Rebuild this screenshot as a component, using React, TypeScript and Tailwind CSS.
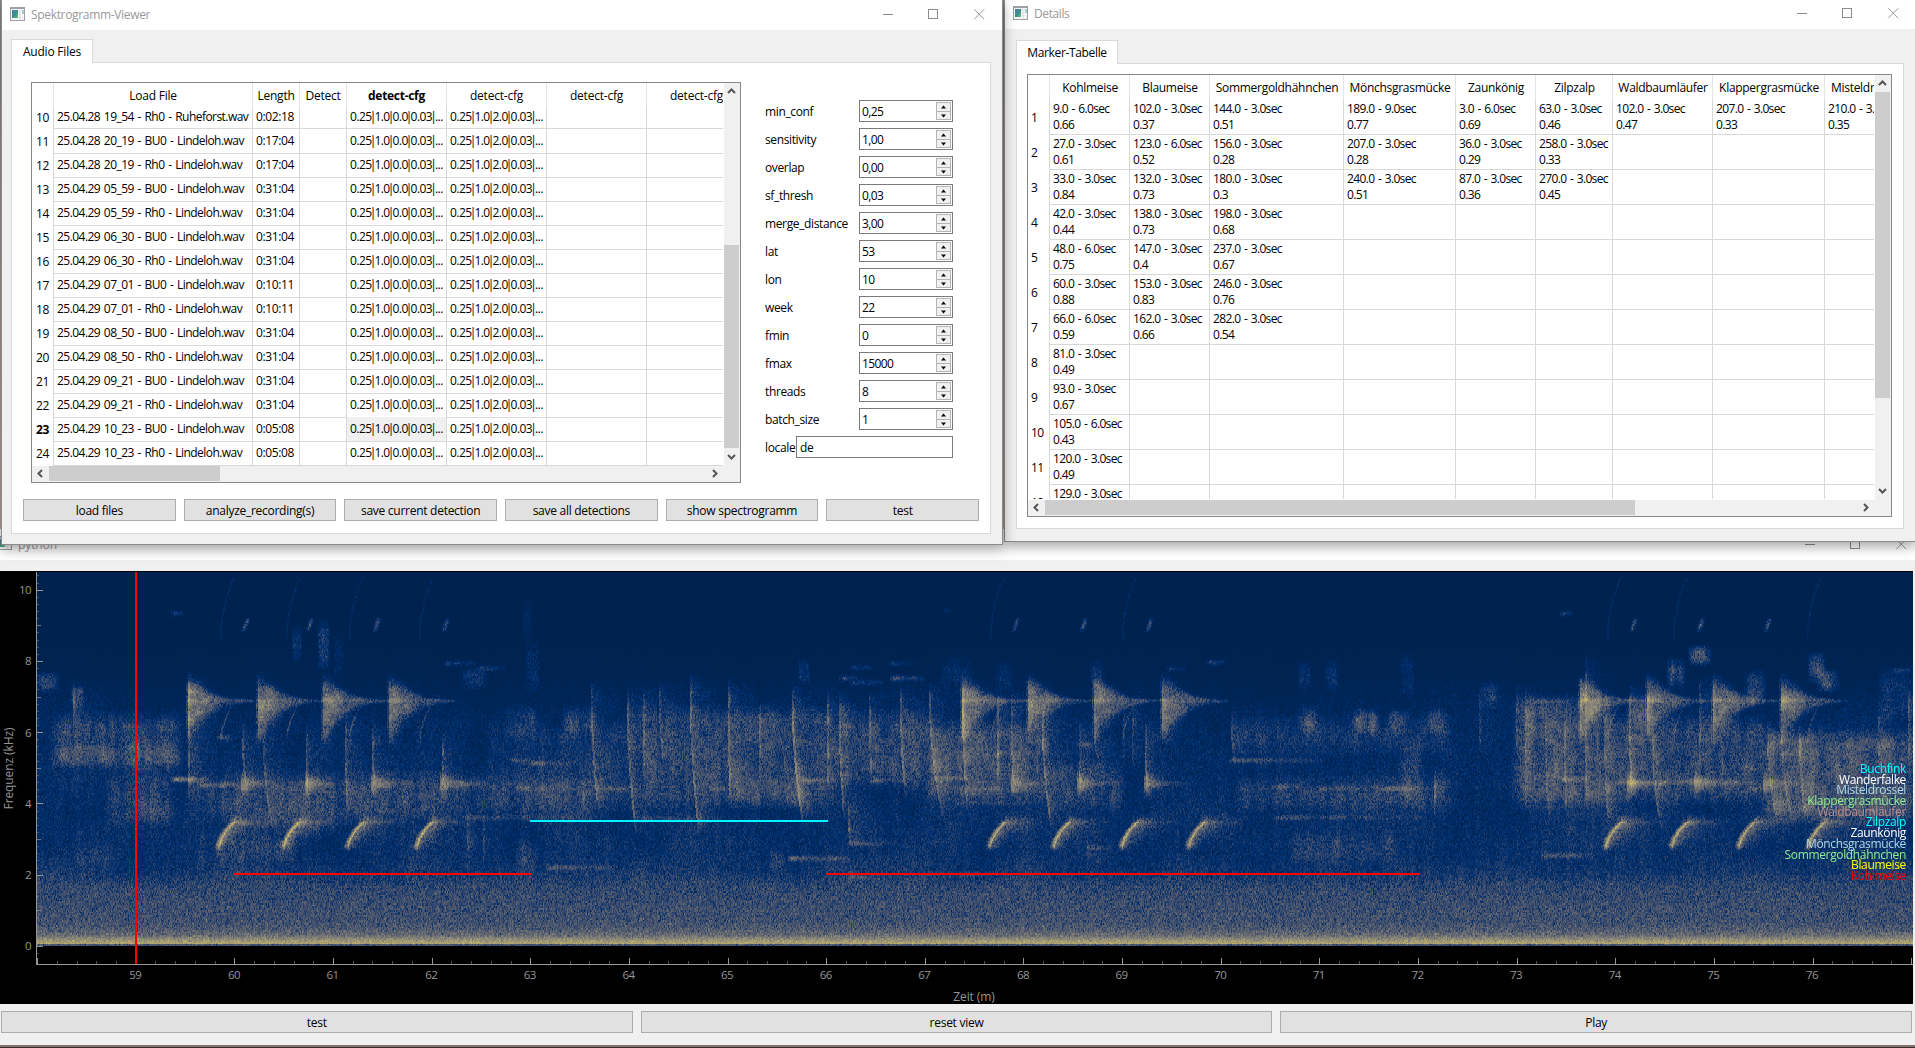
import { Fragment, useLayoutEffect, useRef } from "react";
import type { ReactNode } from "react";
import { clsx } from "clsx";

/* ---------- window chrome ---------- */

function AppIcon() {
  return (
    <svg width="15" height="14" viewBox="0 0 15 14" shapeRendering="crispEdges" className="shrink-0">
      <defs>
        <linearGradient id="appIconFill" x1="0" y1="0" x2="1" y2="1">
          <stop offset="0" stopColor="#4b7fb5" />
          <stop offset="0.55" stopColor="#3f8f86" />
          <stop offset="1" stopColor="#6fbf7a" />
        </linearGradient>
      </defs>
      <rect x="0" y="0" width="15" height="14" fill="#9aa0a6" />
      <rect x="1" y="2" width="13" height="11" fill="#f3f5f7" />
      <rect x="2" y="3" width="6" height="8" fill="url(#appIconFill)" />
      <rect x="9" y="3" width="2" height="9" fill="#e3e6ea" />
      <rect x="12" y="3" width="2" height="4" fill="#a9d0c4" />
    </svg>
  );
}

function WindowButtons() {
  return (
    <svg width="102" height="11" viewBox="0 0 102 11" className="shrink-0" stroke="#8c8c8c" fill="none">
      <path d="M0 5.5H10" />
      <rect x="45.5" y="0.5" width="9" height="9" />
      <path d="M91.3 0.3L101.2 10.2M101.2 0.3L91.3 10.2" strokeWidth="0.9" />
    </svg>
  );
}

function Caret({ dir }: { dir: "up" | "down" | "left" | "right" }) {
  const d = {
    up: "M1 6L4.5 2.5L8 6",
    down: "M1 3L4.5 6.5L8 3",
    left: "M6 1L2.5 4.5L6 8",
    right: "M3 1L6.5 4.5L3 8",
  }[dir];
  return (
    <svg width="9" height="9" viewBox="0 0 9 9" className="shrink-0">
      <path d={d} fill="none" stroke="#555" strokeWidth="2" />
    </svg>
  );
}

function Button({ children }: { children: ReactNode }) {
  return (
    <button className="flex h-[22px] min-w-0 flex-1 items-center justify-center border border-[#adadad] bg-[#e1e1e1] pt-[2px] text-[12px] tracking-[-0.27px]">
      {children}
    </button>
  );
}

/* ---------- left window ---------- */

const RECORDINGS: [number, string, string][] = [
  [10, "25.04.28 19_54 - Rh0 - Ruheforst.wav", "0:02:18"],
  [11, "25.04.28 20_19 - BU0 - Lindeloh.wav", "0:17:04"],
  [12, "25.04.28 20_19 - Rh0 - Lindeloh.wav", "0:17:04"],
  [13, "25.04.29 05_59 - BU0 - Lindeloh.wav", "0:31:04"],
  [14, "25.04.29 05_59 - Rh0 - Lindeloh.wav", "0:31:04"],
  [15, "25.04.29 06_30 - BU0 - Lindeloh.wav", "0:31:04"],
  [16, "25.04.29 06_30 - Rh0 - Lindeloh.wav", "0:31:04"],
  [17, "25.04.29 07_01 - BU0 - Lindeloh.wav", "0:10:11"],
  [18, "25.04.29 07_01 - Rh0 - Lindeloh.wav", "0:10:11"],
  [19, "25.04.29 08_50 - BU0 - Lindeloh.wav", "0:31:04"],
  [20, "25.04.29 08_50 - Rh0 - Lindeloh.wav", "0:31:04"],
  [21, "25.04.29 09_21 - BU0 - Lindeloh.wav", "0:31:04"],
  [22, "25.04.29 09_21 - Rh0 - Lindeloh.wav", "0:31:04"],
  [23, "25.04.29 10_23 - BU0 - Lindeloh.wav", "0:05:08"],
  [24, "25.04.29 10_23 - Rh0 - Lindeloh.wav", "0:05:08"],
];

const FILE_GRID = "grid grid-cols-[22px_199px_47px_47px_100px_100px_100px_100px]";

const SETTINGS: [string, string][] = [
  ["min_conf", "0,25"],
  ["sensitivity", "1,00"],
  ["overlap", "0,00"],
  ["sf_thresh", "0,03"],
  ["merge_distance", "3,00"],
  ["lat", "53"],
  ["lon", "10"],
  ["week", "22"],
  ["fmin", "0"],
  ["fmax", "15000"],
  ["threads", "8"],
  ["batch_size", "1"],
];

function ConfigText({ value }: { value: string }) {
  return (
    <span className="tracking-[-0.55px]">
      {value.split("|").map((part, i) => (
        <Fragment key={i}>
          {i > 0 && <span className="-mr-[1.3px] -ml-[1.9px]">|</span>}
          {part}
        </Fragment>
      ))}
    </span>
  );
}

function FileTable() {
  const cell = "overflow-hidden border-r border-b border-[#d8d8d8] pl-[3px]";
  return (
    <div className="grid h-[401px] w-[710px] shrink-0 grid-cols-[692px_16px] grid-rows-[383px_16px] border border-[#828790] bg-white">
      <div className="flex w-[691px] flex-col overflow-hidden">
        <div className={clsx(FILE_GRID, "h-6 shrink-0 leading-[26px]")}>
          {["", "Load File", "Length", "Detect", "detect-cfg", "detect-cfg", "detect-cfg", "detect-cfg"].map((h, i) => (
            <div
              key={i}
              className={clsx(
                "border-r border-[#e5e5e5] text-center text-[12px] whitespace-nowrap",
                i === 4 ? "font-bold tracking-[-0.3px]" : "tracking-[-0.22px]",
              )}
            >
              {h}
            </div>
          ))}
        </div>
        {RECORDINGS.map(([n, name, len], i) => (
          <div
            key={n}
            className={clsx(
              FILE_GRID,
              "shrink-0 text-[12px] tracking-[-0.38px] whitespace-nowrap",
              i === 0 ? "h-[22px] leading-[20px]" : "h-6 leading-[24px]",
            )}
          >
            <div className={clsx("border-r border-[#d8d8d8] pt-px pl-[4px]", n === 23 && "font-bold")}>{n}</div>
            <div className={clsx(cell, "tracking-[-0.54px] [word-spacing:1.1px]")}>{name}</div>
            <div className={cell}>{len}</div>
            <div className={cell} />
            <div className={clsx(cell, n === 23 && "bg-[#f0f0f0]")}>
              <ConfigText value="0.25|1.0|0.0|0.03|..." />
            </div>
            <div className={cell}>
              <ConfigText value="0.25|1.0|2.0|0.03|..." />
            </div>
            <div className={cell} />
            <div className={cell} />
          </div>
        ))}
      </div>
      <div className="flex flex-col items-center bg-[#f0f0f0] pr-px">
        <div className="flex h-[17px] items-center">
          <Caret dir="up" />
        </div>
        <div className="mt-[145px] h-[203px] w-full bg-[#cdcdcd]" />
        <div className="flex h-[17px] items-center">
          <Caret dir="down" />
        </div>
      </div>
      <div className="flex items-center bg-[#f0f0f0] pb-px">
        <div className="flex w-[17px] justify-center">
          <Caret dir="left" />
        </div>
        <div className="h-full w-[171px] bg-[#cdcdcd]" />
        <div className="mr-[5px] ml-auto">
          <Caret dir="right" />
        </div>
      </div>
      <div className="bg-[#f0f0f0]" />
    </div>
  );
}

function SpinBox({ value }: { value: string }) {
  return (
    <div className="flex h-[22px] w-[94px] items-center justify-between border border-[#7a7a7a] bg-white pr-px pl-[2px]">
      <span className="pt-px tracking-[-0.6px]">{value}</span>
      <div className="flex h-[18px] w-[15px] flex-col">
        {["M4 5.5L6.5 2.5L9 5.5Z", "M4 2.5L6.5 5.5L9 2.5Z"].map((d) => (
          <div key={d} className="-mb-px h-[10px] border border-[#b4b4b4] bg-[#f0f0f0] last:mb-0 last:h-[9px]">
            <svg width="13" height="8" viewBox="0 0 13 8">
              <path d={d} fill="#000" />
            </svg>
          </div>
        ))}
      </div>
    </div>
  );
}

function ViewerWindow() {
  return (
    <section className="absolute top-0 left-px z-20 flex h-[545px] w-[1002px] flex-col border-r border-b border-l border-[#8f8b8b] bg-[#f0f0f0] shadow-[0_4px_12px_rgba(0,0,0,0.38)]">
      <header className="flex h-[30px] shrink-0 items-center bg-white pr-[17px] pl-[8px]">
        <div className="mb-[2px]">
          <AppIcon />
        </div>
        <h1 className="ml-[6px] flex-1 text-[12px] tracking-[-0.33px] text-[#999]">Spektrogramm-Viewer</h1>
        <div className="mb-[2px]">
          <WindowButtons />
        </div>
      </header>
      <div className="flex flex-1 flex-col pt-[9px] pr-[11px] pb-[10px] pl-[9px]">
        <div className="relative z-10 -mb-px flex h-6 w-[82px] shrink-0 items-center justify-center border border-b-0 border-[#d9d9d9] bg-white pt-px text-[12px] tracking-[-0.2px] whitespace-nowrap">
          Audio Files
        </div>
        <div className="flex flex-1 flex-col border border-[#d9d9d9] bg-white">
          <div className="flex pt-[19px] pl-[19px]">
            <FileTable />
            <div className="mt-[18px] ml-[24px] flex w-[188px] flex-col gap-[6px] text-[12px] tracking-[-0.37px]">
              {SETTINGS.map(([label, value]) => (
                <label key={label} className="flex items-center justify-between">
                  <span className="pt-[2px]">{label}</span>
                  <SpinBox value={value} />
                </label>
              ))}
              <label className="flex items-center whitespace-nowrap">
                <span className="w-[31px] pt-[2px] tracking-[-0.35px]">locale</span>
                <span className="flex h-[22px] flex-1 items-center border border-[#7a7a7a] bg-white pt-px pl-[3px]">de</span>
              </label>
            </div>
          </div>
          <div className="mt-[16px] mr-[11px] ml-[11px] flex gap-2">
            {["load files", "analyze_recording(s)", "save current detection", "save all detections", "show spectrogramm", "test"].map((t) => (
              <Button key={t}>{t}</Button>
            ))}
          </div>
        </div>
      </div>
    </section>
  );
}

/* ---------- right window ---------- */

const SPECIES = [
  "Kohlmeise",
  "Blaumeise",
  "Sommergoldhähnchen",
  "Mönchsgrasmücke",
  "Zaunkönig",
  "Zilpzalp",
  "Waldbaumläufer",
  "Klappergrasmücke",
  "Misteldrossel",
];

const MARKERS: string[][] = [
  ["9.0 - 6.0sec|0.66", "102.0 - 3.0sec|0.37", "144.0 - 3.0sec|0.51", "189.0 - 9.0sec|0.77", "3.0 - 6.0sec|0.69", "63.0 - 3.0sec|0.46", "102.0 - 3.0sec|0.47", "207.0 - 3.0sec|0.33", "210.0 - 3.0sec|0.35"],
  ["27.0 - 3.0sec|0.61", "123.0 - 6.0sec|0.52", "156.0 - 3.0sec|0.28", "207.0 - 3.0sec|0.28", "36.0 - 3.0sec|0.29", "258.0 - 3.0sec|0.33"],
  ["33.0 - 3.0sec|0.84", "132.0 - 3.0sec|0.73", "180.0 - 3.0sec|0.3", "240.0 - 3.0sec|0.51", "87.0 - 3.0sec|0.36", "270.0 - 3.0sec|0.45"],
  ["42.0 - 3.0sec|0.44", "138.0 - 3.0sec|0.73", "198.0 - 3.0sec|0.68"],
  ["48.0 - 6.0sec|0.75", "147.0 - 3.0sec|0.4", "237.0 - 3.0sec|0.67"],
  ["60.0 - 3.0sec|0.88", "153.0 - 3.0sec|0.83", "246.0 - 3.0sec|0.76"],
  ["66.0 - 6.0sec|0.59", "162.0 - 3.0sec|0.66", "282.0 - 3.0sec|0.54"],
  ["81.0 - 3.0sec|0.49"],
  ["93.0 - 3.0sec|0.67"],
  ["105.0 - 6.0sec|0.43"],
  ["120.0 - 3.0sec|0.49"],
  ["129.0 - 3.0sec|"],
];

const MARKER_GRID = "grid grid-cols-[22px_80px_80px_134px_112px_80px_77px_100px_112px_90px]";

function MarkerTable() {
  return (
    <div className="grid h-[443px] w-[865px] grid-cols-[847px_16px] grid-rows-[425px_16px] border border-[#828790] bg-white">
      <div className="flex h-[424px] w-[846px] flex-col overflow-hidden">
        <div className={clsx(MARKER_GRID, "h-6 shrink-0 leading-[26px]")}>
          <div className="border-r border-[#e5e5e5]" />
          {SPECIES.map((s) => (
            <div
              key={s}
              className={clsx(
                "border-r border-[#e5e5e5] text-[12px] tracking-[-0.29px] whitespace-nowrap",
                s === "Misteldrossel" ? "pl-[6px]" : "pl-px text-center",
              )}
            >
              {s}
            </div>
          ))}
        </div>
        {MARKERS.map((row, r) => (
          <div key={r} className={clsx(MARKER_GRID, "h-[35px] shrink-0 text-[12px] whitespace-nowrap")}>
            <div className="border-r border-[#d8d8d8] pt-px pl-[3px] leading-[35px] tracking-[-0.5px]">{r + 1}</div>
            {SPECIES.map((s, c) => {
              const [span, score] = (row[c] ?? "|").split("|");
              return (
                <div
                  key={s}
                  className="overflow-hidden border-r border-b border-[#d8d8d8] pt-[2px] pl-[3px] leading-4 tracking-[-0.65px] [word-spacing:1.1px]"
                >
                  <div>{span}</div>
                  <div>{score}</div>
                </div>
              );
            })}
          </div>
        ))}
      </div>
      <div className="flex flex-col items-center bg-[#f0f0f0] pr-px">
        <div className="flex h-[17px] items-center">
          <Caret dir="up" />
        </div>
        <div className="h-[306px] w-full bg-[#cdcdcd]" />
        <div className="mt-auto flex h-[18px] items-center pb-px">
          <Caret dir="down" />
        </div>
      </div>
      <div className="flex items-center bg-[#f0f0f0] pb-px">
        <div className="flex w-[17px] justify-center">
          <Caret dir="left" />
        </div>
        <div className="h-full w-[590px] bg-[#cdcdcd]" />
        <div className="mr-[5px] ml-auto">
          <Caret dir="right" />
        </div>
      </div>
      <div className="bg-[#f0f0f0]" />
    </div>
  );
}

function DetailsWindow() {
  return (
    <section className="absolute top-0 left-[1004px] z-10 flex h-[542px] w-[912px] flex-col border-b border-l border-[#8f8b8b] bg-[#f0f0f0] shadow-[0_4px_12px_rgba(0,0,0,0.38)]">
      <header className="flex h-[29px] shrink-0 items-center bg-white pr-[17px] pl-[8px]">
        <div className="mb-[3px]">
          <AppIcon />
        </div>
        <h1 className="mb-px ml-[6px] flex-1 text-[12px] tracking-[-0.4px] text-[#999]">Details</h1>
        <div className="mb-[2px]">
          <WindowButtons />
        </div>
      </header>
      <div className="flex flex-1 flex-col pt-[11px] pr-[12px] pb-[12px] pl-[11px]">
        <div className="relative z-10 -mb-px flex h-6 w-[102px] shrink-0 items-center justify-center border border-b-0 border-[#d9d9d9] bg-white pt-px text-[12px] tracking-[-0.35px] whitespace-nowrap">
          Marker-Tabelle
        </div>
        <div className="flex-1 border border-[#d9d9d9] bg-white pt-[10px] pl-[10px]">
          <MarkerTable />
        </div>
      </div>
    </section>
  );
}

/* ---------- spectrogram ---------- */

const W = 1876;
const H = 374;

const CIVIDIS = [
  [0, 34, 78], [0, 48, 112], [46, 67, 108], [76, 87, 108], [102, 105, 112], [125, 124, 120],
  [148, 142, 119], [174, 163, 113], [200, 184, 102], [227, 207, 86], [254, 232, 56],
];

/* [x, top, bottom, level, slant] – broadband onsets that fade to the right */
const STREAKS = [
  [36, 113, 155, 0.26, 0], [151, 108, 222, 0.3, 0], [205, 155, 218, 0.25, 4], [226, 161, 255, 0.24, 9],
  [269, 158, 218, 0.27, 0], [308, 148, 235, 0.28, 2], [335, 155, 218, 0.25, 2], [405, 165, 218, 0.25, 0],
  [554, 115, 235, 0.27, 7], [590, 121, 255, 0.32, 8], [606, 121, 205, 0.22, 0], [622, 115, 195, 0.28, 5],
  [653, 108, 255, 0.34, 8], [691, 111, 228, 0.3, 2], [722, 135, 205, 0.28, 0], [755, 121, 248, 0.38, 10],
  [790, 121, 215, 0.27, 0], [802, 125, 238, 0.32, 4], [811, 233, 271, 0.32, 2], [832, 125, 208, 0.28, 2],
  [863, 118, 221, 0.32, 5], [892, 115, 238, 0.28, 12], [925, 108, 235, 0.28, 5], [960, 125, 208, 0.28, 0],
  [974, 121, 208, 0.24, 2], [1005, 138, 250, 0.34, 8], [1042, 155, 215, 0.22, 0], [1057, 160, 190, 0.25, 5],
  [1086, 135, 190, 0.12, 0], [1095, 135, 190, 0.12, 0], [1108, 155, 221, 0.32, 2], [1194, 145, 188, 0.22, 3],
  [1442, 121, 180, 0.15, 0], [1397, 200, 238, 0.36, 0], [1479, 118, 178, 0.2, 0], [1488, 121, 238, 0.2, 0],
  [1508, 140, 238, 0.22, 3], [1527, 140, 238, 0.22, 2], [1548, 90, 235, 0.22, 0], [1567, 140, 250, 0.26, 4],
  [1592, 115, 218, 0.24, 2], [1615, 165, 251, 0.26, 8], [1662, 111, 195, 0.22, 0], [1730, 155, 245, 0.26, 9],
  [1744, 155, 245, 0.26, 10], [1762, 155, 245, 0.26, 6], [1841, 135, 190, 0.15, 0], [1871, 121, 190, 0.24, 0],
  [113, 205, 250, 0.12, 0], [545, 205, 238, 0.18, 0], [430, 240, 290, 0.14, 0], [446, 240, 290, 0.12, 0],
];

/* [left, right, top, bottom, level] – diffuse energy */
const PATCHES = [
  [16, 143, 141, 196, 0.13], [18, 90, 175, 194, 0.1], [90, 140, 168, 200, 0.12], [71, 134, 196, 256, 0.08],
  [95, 135, 225, 250, 0.07], [36, 170, 250, 300, 0.02], [151, 560, 200, 250, 0.07], [187, 300, 205, 262, 0.1],
  [300, 430, 200, 250, 0.05], [178, 260, 262, 290, 0.09], [449, 603, 150, 240, 0.07], [468, 500, 135, 165, 0.12],
  [528, 560, 135, 165, 0.13], [480, 500, 268, 300, 0.09], [603, 800, 135, 235, 0.12], [700, 770, 205, 235, 0.1],
  [800, 890, 140, 215, 0.11], [889, 1011, 150, 230, 0.16], [889, 1000, 175, 200, 0.05], [1011, 1085, 190, 240, 0.12],
  [1195, 1413, 145, 182, 0.08], [1200, 1413, 205, 240, 0.1], [1254, 1360, 260, 292, 0.08], [1262, 1280, 135, 162, 0.14],
  [1318, 1340, 138, 162, 0.22], [1354, 1373, 138, 162, 0.18], [1389, 1409, 138, 162, 0.18], [1479, 1577, 125, 235, 0.16],
  [1360, 1385, 165, 235, 0.08], [1577, 1728, 145, 230, 0.15], [1592, 1612, 125, 155, 0.18], [1728, 1876, 158, 250, 0.2],
  [1632, 1646, 88, 115, 0.2], [1653, 1672, 76, 91, 0.24], [1709, 1727, 100, 135, 0.2], [1774, 1786, 82, 110, 0.24],
  [1782, 1800, 100, 118, 0.22], [0, 20, 102, 118, 0.16], [36, 45, 113, 135, 0.12], [40, 80, 275, 292, 0.05],
  [425, 450, 98, 115, 0.1], [1446, 1460, 110, 135, 0.1], [1843, 1876, 95, 150, 0.08], [735, 745, 280, 300, 0.1],
  [283, 290, 48, 98, 0.11], [258, 262, 55, 88, 0.1], [491, 500, 70, 120, 0.08], [488, 492, 28, 70, 0.04],
  [764, 770, 90, 110, 0.1], [1055, 1065, 90, 115, 0.08], [960, 975, 90, 120, 0.06], [300, 305, 60, 110, 0.04],
  [1263, 1272, 90, 118, 0.07], [1290, 1300, 90, 118, 0.08], [1365, 1375, 80, 130, 0.05], [905, 935, 85, 118, 0.05],
];

/* [left, right, y, level] – narrow tones */
const TONES = [
  [136, 172, 207, 0.5], [163, 190, 213, 0.35], [186, 206, 212, 0.3], [428, 567, 245, 0.17], [603, 685, 246, 0.17],
  [475, 500, 188, 0.2], [495, 543, 191, 0.22], [510, 583, 295, 0.22], [754, 812, 286, 0.42], [813, 842, 305, 0.22],
  [813, 855, 271, 0.22], [766, 799, 208, 0.3], [836, 866, 208, 0.28], [897, 932, 206, 0.36], [815, 848, 110, 0.2],
  [805, 820, 106, 0.25], [856, 888, 106, 0.28], [1195, 1285, 188, 0.22], [1238, 1265, 214, 0.22], [1285, 1330, 216, 0.24],
  [1340, 1395, 216, 0.26], [1238, 1390, 245, 0.18], [1526, 1550, 207, 0.34], [1507, 1556, 283, 0.34], [1581, 1645, 210, 0.3],
  [1640, 1700, 209, 0.22], [1715, 1740, 216, 0.34], [410, 440, 91, 0.18], [443, 470, 96, 0.18], [930, 1010, 217, 0.2],
  [672, 690, 216, 0.25], [560, 605, 216, 0.25], [425, 450, 212, 0.12], [480, 545, 216, 0.14], [920, 990, 231, 0.15],
  [1042, 1056, 172, 0.28], [815, 835, 95, 0.16], [855, 880, 91, 0.14], [1132, 1150, 96, 0.14], [1172, 1190, 90, 0.2],
  [1592, 1606, 165, 0.26], [1496, 1545, 129, 0.2], [1050, 1075, 275, 0.2], [1050, 1060, 282, 0.15], [925, 950, 302, 0.15],
  [137, 146, 41, 0.22], [908, 914, 38, 0.12], [1526, 1536, 41, 0.18], [1860, 1876, 98, 0.15], [183, 200, 165, 0.22],
];

const WEDGES = [151, 221, 286, 352, 925, 991, 1057, 1125, 1543, 1610, 1676, 1744];
const HOOKS = [181, 246, 310, 379, 952, 1016, 1084, 1151, 1568, 1634, 1701, 1771];
const BLOBS = [206, 270, 336, 405, 976, 1042, 1109, 1592, 1659, 1728];
const CHIRPS = [206, 270, 337, 406, 976, 1044, 1110, 1594, 1661, 1728];
const ARCS = [183, 249, 312, 382, 953, 1085, 1570, 1636, 1770];

/* [y, level] – background energy from the top of the plot down to 0 kHz */
const FLOOR = [
  [0, 0], [70, 0.002], [100, 0.01], [125, 0.03], [150, 0.055], [200, 0.075], [240, 0.09], [280, 0.1],
  [298, 0.14], [315, 0.22], [335, 0.255], [350, 0.27], [357, 0.32], [363, 0.42], [366, 0.55], [369, 0.66], [371, 0.7], [372, 0.3], [374, 0.25],
];

function renderSpectrogram(ctx: CanvasRenderingContext2D) {
  let seed = 20250429;
  const rnd = () => {
    seed = (Math.imul(seed, 1664525) + 1013904223) >>> 0;
    return seed / 4294967296;
  };

  /* smooth value noise, cell size cw × ch */
  const cloud = (cw: number, ch: number) => {
    const cols = Math.ceil(W / cw) + 2;
    const rows = Math.ceil(H / ch) + 2;
    const grid = Float32Array.from({ length: cols * rows }, () => rnd());
    return (x: number, y: number) => {
      const gx = x / cw;
      const gy = y / ch;
      const ix = gx | 0;
      const iy = gy | 0;
      const fx = gx - ix;
      const fy = gy - iy;
      const i = iy * cols + ix;
      const top = grid[i] + (grid[i + 1] - grid[i]) * fx;
      const low = grid[i + cols] + (grid[i + cols + 1] - grid[i + cols]) * fx;
      return top + (low - top) * fy;
    };
  };
  const wide = cloud(38, 30);
  const tall = cloud(5, 38);
  const fine = cloud(7, 7);

  const field = new Float32Array(W * H);
  const put = (x: number, y: number, v: number) => {
    x |= 0;
    y |= 0;
    if (x >= 0 && x < W && y >= 0 && y < H) {
      const i = y * W + x;
      field[i] += v * (1 - field[i] * 0.7);
    }
  };

  for (let y = 0, k = 0; y < H; y++) {
    while (k < FLOOR.length - 2 && y >= FLOOR[k + 1][0]) k++;
    const [y0, v0] = FLOOR[k];
    const [y1, v1] = FLOOR[k + 1];
    const base = v0 + ((v1 - v0) * (y - y0)) / (y1 - y0);
    const mix = Math.max(0, Math.min(1, (320 - y) / 30));
    for (let x = 0; x < W; x++) {
      const drift = 0.35 + 0.8 * wide(x, y) + 0.5 * tall(x, y);
      field[y * W + x] = base * (1 + (drift - 1) * mix);
    }
  }

  for (const [l, r, t, b, v] of PATCHES) {
    const ex = Math.min(9, (r - l) / 2.2);
    const ey = Math.min(16, (b - t) / 2.2);
    for (let x = l - 3; x < r + 3; x++) {
      for (let y = t - 3; y < b + 3; y++) {
        const e = Math.max(0, Math.min(1, (x - l + 4) / ex, (r + 3 - x) / ex)) * Math.max(0, Math.min(1, (y - t + 4) / ey, (b + 3 - y) / ey));
        put(x, y, v * e * (0.35 + 0.75 * tall(x, y) + 0.55 * fine(x, y)));
      }
    }
  }

  for (const [x0, t, b, v, slant] of STREAKS) {
    for (let y = t - 8; y < b + 8; y++) {
      const q = (y - t) / (b - t);
      const edge = Math.max(0, Math.min(1, (y - t + 8) / 20, (b + 8 - y) / 20));
      const cx = x0 + slant * q * q;
      for (let d = 0; d < 30; d++) {
        put(cx + d, y, v * edge * (d < 2 ? 0.78 : 0.46 * Math.exp(-d / 11)) * (0.6 + 0.8 * fine(x0 + d, Math.max(0, y))));
      }
    }
  }

  for (const [l, r, y0, v] of TONES) {
    for (let x = l - 3; x < r; x++) {
      const q = Math.max(0, (x - l) / (r - l));
      const lead = x < l ? 0.4 : 1;
      for (let d = -6; d <= 6; d++) put(x, y0 + d, v * 0.85 * lead * (1 - q * 0.75) * Math.exp(-(d * d) / 6) * (0.5 + fine(Math.max(0, x), y0)));
    }
  }

  for (const x0 of WEDGES) {
    for (let d = -2; d < 66; d++) {
      const p = Math.max(0, d);
      const up = 20 * Math.exp(-Math.pow(p / 24, 1.6)) + 0.8;
      const down = 40 * Math.exp(-Math.pow(p / 21, 1.2)) + 0.8;
      const lead = d < 0 ? 0.35 : 1;
      for (let y = 100; y < 172; y++) {
        const dy = y - 128;
        const s = dy < 0 ? -dy / up : dy / down;
        const body = (0.48 * Math.exp(-p / 46)) / (1 + Math.exp((s - 0.85) * 6));
        const tone = 0.15 * Math.exp(-p / 34) * Math.exp(-(dy * dy) / 4);
        put(x0 + d, y, lead * (body * (0.65 + 0.6 * fine(x0 + p, y)) + tone));
      }
    }
  }

  for (const x0 of HOOKS) {
    for (let y = 238; y < 279; y++) {
      const q = Math.max(0, Math.min(1, (278 - y) / 28));
      const cx = x0 + 15 * Math.pow(q, 1.9);
      const reach = 3 + 12 * q;
      const fade = y > 273 ? (279 - y) / 6 : y < 250 ? Math.exp(-Math.pow((250 - y) / 5, 2)) : 1;
      for (let d = -4; d < 44; d++) {
        const core = y >= 250 ? 0.42 * Math.exp(-(d * d) / 3) : 0;
        const fill = d > 0 ? 0.44 * Math.exp(-d / reach) : d > -4 ? 0.14 : 0;
        put(cx + d, y, (core + fill) * fade);
      }
    }
    for (let d = 0; d < 34; d++) {
      for (let k = -2; k <= 2; k++) put(x0 + 14 + d, 250 + k, 0.1 * Math.exp(-d / 16) * Math.exp(-(k * k) / 2));
    }
  }

  for (const x0 of BLOBS) {
    for (let d = -2; d < 50; d++) {
      const w = 2.5 + 8 * Math.exp(-Math.abs(d) / 8);
      for (let k = -12; k < 16; k++) {
        put(x0 + d, 211 + k, 0.4 * Math.exp(-Math.abs(d) / 20) * Math.exp(-(k * k) / (w * w)));
      }
    }
  }

  for (const x0 of CHIRPS) {
    for (let k = 0; k < 14; k++) {
      for (let d = -2; d < 4; d++) put(x0 + (14 - k) * 0.35 + d, 46 + k, 0.26 * Math.exp(-(d * d) / 4) * Math.sin(((k + 2) / 17) * Math.PI));
    }
  }

  for (const x0 of ARCS) {
    for (let y = 6; y < 68; y++) {
      const q = (68 - y) / 62;
      for (let d = 0; d < 2; d++) put(x0 + 13 * q * q + d, y, 0.05);
    }
    for (let y = 132; y < 172; y++) {
      const q = (172 - y) / 40;
      for (let d = 0; d < 2; d++) put(x0 + 12 * q * q + d, y, 0.16 * Math.sin(q * Math.PI));
    }
  }

  const img = ctx.createImageData(W, H);
  const grain = new Float32Array(W);
  for (let y = 0; y < H; y++) {
    const fresh = y === 0 || Math.floor(y / 1.67) !== Math.floor((y - 1) / 1.67);
    for (let x = 0; x < W; x++) {
      const i = y * W + x;
      const v = field[i];
      if (fresh) {
        grain[x] = rnd() + rnd() + rnd() - 1.5;
        if (rnd() < 0.1) grain[x] -= 0.7;
      }
      const amp = v < 0.03 ? v * 0.5 : v > 0.55 ? 0.1 : Math.min(0.14, 0.03 + v * 0.55);
      const c = Math.max(0, Math.min(0.999, v + grain[x] * amp)) * 10;
      const k = c | 0;
      const f = c - k;
      const a = CIVIDIS[k];
      const b = CIVIDIS[k + 1];
      const o = i * 4;
      img.data[o] = a[0] + (b[0] - a[0]) * f;
      img.data[o + 1] = a[1] + (b[1] - a[1]) * f;
      img.data[o + 2] = a[2] + (b[2] - a[2]) * f;
      img.data[o + 3] = 255;
    }
  }
  ctx.putImageData(img, 0, 0);
}

function Spectrogram() {
  const ref = useRef<HTMLCanvasElement>(null);
  useLayoutEffect(() => {
    const ctx = ref.current?.getContext("2d");
    if (ctx) renderSpectrogram(ctx);
  }, []);
  return <canvas ref={ref} width={W} height={H} className="block h-[374px] w-[1876px]" />;
}

const LEGEND: [string, string][] = [
  ["Buchfink", "text-[#00ffff]"],
  ["Wanderfalke", "text-white"],
  ["Misteldrossel", "text-[#add8e6]"],
  ["Klappergrasmücke", "text-[#90ee90]"],
  ["Waldbaumläufer", "text-[#bc8f8f]"],
  ["Zilpzalp", "text-[#00ffff]"],
  ["Zaunkönig", "text-white"],
  ["Mönchsgrasmücke", "text-[#add8e6]"],
  ["Sommergoldhähnchen", "text-[#90ee90]"],
  ["Blaumeise", "text-[#ffff00]"],
  ["Kohlmeise", "text-[#ff0000]"],
];

const SEC = 98.64;
const KHZ = 35.63;

function PlotOverlay() {
  const xTicks = Array.from({ length: 95 }, (_, i) => i + 1).map((i) => ({
    x: Math.round(98.7 - SEC + (i * SEC) / 5) + 0.5,
    major: i % 5 === 0,
  }));
  const yTicks = Array.from({ length: 54 }, (_, i) => i - 1).map((i) => ({
    y: Math.round(374 - (i * KHZ) / 5) + 0.5,
    len: i % 10 === 0 ? 6 : i % 5 === 0 ? 4 : 2,
  }));
  return (
    <svg width="1877" height="393" viewBox="-1 0 1877 393" className="absolute top-0 left-0" shapeRendering="crispEdges">
      {yTicks.map((t) => (
        <path key={t.y} d={`M0 ${t.y}h${t.len}`} stroke="#969696" strokeOpacity={t.len > 5 ? 1 : t.len > 3 ? 0.7 : 0.4} />
      ))}
      {xTicks
        .filter((t) => t.x > 0)
        .map((t) => (
          <path key={t.x} d={`M${t.x} 392v${t.major ? -6 : -3}`} stroke={t.major ? "#969696" : "#4d4d4d"} />
        ))}
      <path d="M-0.5 0V392.5H1876M0.5 392v-6" stroke="#969696" fill="none" />
      <path d="M99 0V392" stroke="#ff0000" strokeWidth="2" />
      <path d="M197 302H495M789 302H1383" stroke="#f00" strokeWidth="2" />
      <path d="M493 249H791" stroke="#00f4ff" strokeWidth="2" />
    </svg>
  );
}

function SpectrogramWindow() {
  return (
    <section className="absolute top-[529px] left-0 z-0 flex h-[516px] w-[1915px] flex-col bg-[#f0f0f0]">
      <header className="flex h-[31px] shrink-0 items-center bg-white pr-[8px]">
        <div className="-ml-[3px] pb-[3px]">
          <AppIcon />
        </div>
        <h1 className="ml-[6px] flex-1 text-[12px] tracking-[-0.1px] text-[#999]">python</h1>
        <WindowButtons />
      </header>
      <div className="mt-[11px] flex h-[433px] w-[1913px] shrink-0 flex-col overflow-hidden bg-black pt-px text-[11.5px] tracking-[-0.6px] text-[#969696]">
        <div className="flex h-[393px] shrink-0">
          <div className="flex w-[36px] justify-between">
            <div className="flex w-[20px] items-center justify-center">
              <span className="-rotate-90 pb-px text-[12px] tracking-[-0.1px] whitespace-nowrap">Frequenz (kHz)</span>
            </div>
            <div className="flex h-[393px] flex-col items-end overflow-hidden pt-[10px] pr-[5px]">
              {[10, 8, 6, 4, 2, 0].map((f) => (
                <span key={f} className="h-[71.26px] shrink-0 leading-4">
                  {f}
                </span>
              ))}
            </div>
          </div>
          <div className="relative h-[393px] w-[1877px] shrink-0 pl-px">
            <Spectrogram />
            <PlotOverlay />
            <ul className="absolute top-[191px] right-[7px] text-right text-[12px] tracking-[-0.35px]">
              {LEGEND.map(([name, tone]) => (
                <li key={name} className={clsx("h-[10.7px] leading-[11px]", tone)}>
                  {name}
                </li>
              ))}
            </ul>
          </div>
        </div>
        <div className="mt-[2px] ml-[86px] flex h-4 shrink-0 leading-4">
          {Array.from({ length: 18 }, (_, i) => (
            <span key={i} className="w-[98.64px] shrink-0 text-center">
              {59 + i}
            </span>
          ))}
        </div>
        <div className="mt-[6px] shrink-0 pl-[35px] text-center text-[12px] leading-4 tracking-[-0.1px]">Zeit (m)</div>
      </div>
      <div className="mt-[7px] flex gap-2 pr-[3px] pl-px">
        <Button>test</Button>
        <Button>reset view</Button>
        <Button>Play</Button>
      </div>
    </section>
  );
}

export default function App() {
  return (
    <main className="relative h-[1048px] w-[1915px] overflow-hidden bg-[#806a62] font-['Open_Sans','Noto_Sans',sans-serif] text-black">
      <div className="h-[529px] bg-gradient-to-b from-[#8d8a88] to-[#b8a49c]" />
      <ViewerWindow />
      <DetailsWindow />
      <SpectrogramWindow />
      <div className="absolute top-[1045px] left-0 h-[3px] w-full border-b border-[#3a302e] bg-[#85716a]" />
    </main>
  );
}
